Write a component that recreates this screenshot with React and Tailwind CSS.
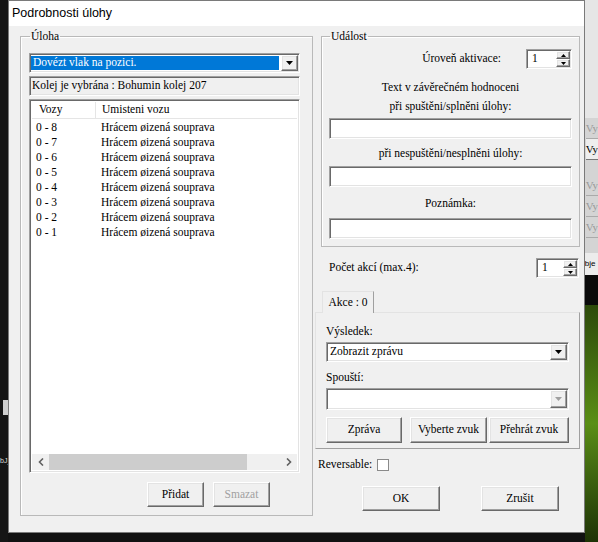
import React from 'react';

// klasické 3D okraje Windows dialogu
const sunken = 'border border-t-[#a0a0a0] border-l-[#a0a0a0] border-r-white border-b-white shadow-[inset_1px_1px_0_#696969,inset_-1px_-1px_0_#e3e3e3]';
const raised = 'border border-t-white border-l-white border-r-[#696969] border-b-[#696969] shadow-[inset_-1px_-1px_0_#a0a0a0,inset_1px_1px_0_#e3e3e3]';

function Arrow({ dir = 'down', disabled }) {
    const color = disabled ? '#a0a0a0' : '#000';
    const pts = dir === 'down' ? '0,0 7,0 3.5,4' : '0,4 7,4 3.5,0';
    return (
        <svg width="7" height="4" viewBox="0 0 7 4">
            <polygon points={pts} fill={color} />
        </svg>
    );
}

function Combo({ value, selected, disabled, className = '' }) {
    return (
        <div className={`flex h-[20px] bg-white ${sunken} ${className}`}>
            <div className="flex-1 flex items-center px-[1px] py-[2px]">
                {value && (
                    <span className={`w-full h-full flex items-center px-[2px] ${selected ? 'bg-[#0078d7] text-white' : 'text-black'}`}>
                        {value}
                    </span>
                )}
            </div>
            <div className={`w-[17px] m-[1px] flex items-center justify-center bg-[#f0f0f0] ${raised}`}>
                <Arrow disabled={disabled} />
            </div>
        </div>
    );
}

function Spin({ value, className = '' }) {
    return (
        <div className={`flex h-[20px] bg-white ${sunken} ${className}`}>
            <div className="flex-1 flex items-center pl-[5px]">{value}</div>
            <div className="w-[16px] flex flex-col p-[1px] gap-0">
                <div className={`flex-1 flex items-center justify-center bg-[#f0f0f0] ${raised}`}>
                    <svg width="5" height="3" viewBox="0 0 5 3"><polygon points="0,3 5,3 2.5,0" fill="#000" /></svg>
                </div>
                <div className={`flex-1 flex items-center justify-center bg-[#f0f0f0] ${raised}`}>
                    <svg width="5" height="3" viewBox="0 0 5 3"><polygon points="0,0 5,0 2.5,3" fill="#000" /></svg>
                </div>
            </div>
        </div>
    );
}

function Button({ children, disabled, className = '' }) {
    return (
        <button className={`flex items-center justify-center bg-[#f0f0f0] ${raised} ${disabled ? 'text-[#a0a0a0]' : 'text-black'} ${className}`}>
            {children}
        </button>
    );
}

function TextBox({ className = '' }) {
    return <div className={`h-[21px] bg-white ${sunken} ${className}`} />;
}

const vozy = ['0 - 8', '0 - 7', '0 - 6', '0 - 5', '0 - 4', '0 - 3', '0 - 2', '0 - 1'];

function Uloha() {
    return (
        <fieldset className="w-[293px] border border-[#b9b9b9] shadow-[inset_1px_1px_0_white] pl-[8px] pr-[12px] pt-[9px] pb-[8px] flex flex-col">
            <legend className="ml-[1px] px-[1px] leading-[15px]">Úloha</legend>
            <Combo value="Dovézt vlak na pozici." selected />
            <div className={`mt-[3px] h-[20px] flex items-center px-[2px] bg-[#f0f0f0] ${sunken}`}>
                Kolej je vybrána : Bohumin kolej 207
            </div>
            <div className={`mt-[3px] h-[374px] bg-white flex flex-col ${sunken} p-[2px]`}>
                <div className="flex h-[17px] border-b border-[#e5e5e5]">
                    <div className="w-[64px] pl-[7px] border-r border-[#e5e5e5] flex items-center">Vozy</div>
                    <div className="pl-[6px] flex items-center">Umisteni vozu</div>
                </div>
                <div className="flex-1 flex flex-col pt-[1px]">
                    {vozy.map((v) => (
                        <div key={v} className="flex h-[15px] items-center">
                            <span className="w-[69px] pl-[4px]">{v}</span>
                            <span>Hrácem øizená souprava</span>
                        </div>
                    ))}
                </div>
                <div className="h-[16px] flex items-center bg-[#f0f0f0]">
                    <div className="w-[17px] flex justify-center">
                        <svg width="6" height="8" viewBox="0 0 6 8"><polyline points="5,0.5 1.5,4 5,7.5" fill="none" stroke="#606060" strokeWidth="1.6" /></svg>
                    </div>
                    <div className="w-[198px] h-full bg-[#cdcdcd]" />
                    <div className="flex-1" />
                    <div className="w-[17px] flex justify-center">
                        <svg width="6" height="8" viewBox="0 0 6 8"><polyline points="1,0.5 4.5,4 1,7.5" fill="none" stroke="#606060" strokeWidth="1.6" /></svg>
                    </div>
                </div>
            </div>
            <div className="flex justify-center gap-[9px] mt-[9px] pl-[88px]">
                <Button className="w-[57px] h-[25px]">Přidat</Button>
                <Button className="w-[57px] h-[25px]" disabled>Smazat</Button>
            </div>
        </fieldset>
    );
}

function Udalost() {
    return (
        <fieldset className="ml-[8px] w-[259px] border border-[#b9b9b9] shadow-[inset_1px_1px_0_white] pl-[7px] pr-[7px] pt-[5px] pb-[7px] flex flex-col">
            <legend className="ml-[1px] px-[1px] leading-[15px]">Událost</legend>
            <div className="flex items-center justify-end">
                <span className="mr-[25px]">Úroveň aktivace:</span>
                <Spin value="1" className="w-[46px]" />
            </div>
            <div className="text-center mt-[9px] leading-[19px]">Text v závěrečném hodnoceni</div>
            <div className="text-center leading-[19px]">při spuštěni/splněni úlohy:</div>
            <TextBox className="mt-[2px]" />
            <div className="text-center mt-[5px] leading-[19px]">při nespuštěni/nesplněni úlohy:</div>
            <TextBox className="mt-[3px]" />
            <div className="text-center mt-[7px] leading-[19px]">Poznámka:</div>
            <TextBox className="mt-[5px]" />
        </fieldset>
    );
}

function Akce() {
    return (
        <div className="flex flex-col ml-[2px]">
            <div className="flex pl-[7px]">
                <div className="w-[52px] h-[22px] border border-b-0 border-t-[#e3e3e3] border-l-[#e3e3e3] border-r-[#a0a0a0] flex items-center justify-center bg-[#f0f0f0] relative top-[1px]">
                    Akce : 0
                </div>
            </div>
            <div className="w-[265px] h-[137px] border border-t-[#e3e3e3] border-l-[#e3e3e3] border-r-[#a0a0a0] border-b-[#a0a0a0] px-[10px] pt-[11px] flex flex-col">
                <div className="leading-[15px]">Výsledek:</div>
                <Combo value="Zobrazit zprávu" className="mt-[3px]" />
                <div className="leading-[15px] mt-[8px]">Spouští:</div>
                <Combo disabled className="mt-[3px] h-[22px]" />
                <div className="flex gap-[8px] mt-[7px]">
                    <Button className="w-[78px] h-[26px]">Zpráva</Button>
                    <div className="flex gap-[2px]">
                        <Button className="w-[77px] h-[26px]">Vyberte zvuk</Button>
                        <Button className="w-[80px] h-[26px]">Přehrát zvuk</Button>
                    </div>
                </div>
            </div>
        </div>
    );
}

export default function App() {
    return (
        <div className="w-[598px] h-[542px] bg-[#111] flex overflow-hidden text-[11.5px] text-black" style={{ fontFamily: '"Liberation Serif", serif' }}>
            {/* plocha vlevo */}
            <div className="w-[8px] flex flex-col bg-[#151515]">
                <div className="h-[400px]" />
                <div className="ml-[3px] w-[5px] h-[15px] bg-[#cfcfcf]" />
                <div className="mt-[40px] text-[#ddd] text-[7px] leading-[12px] whitespace-nowrap" style={{ fontFamily: '"Liberation Sans", sans-serif' }}>bJ_</div>
            </div>

            {/* okno dialogu */}
            <div className="w-[581px] h-[533px] flex flex-col border border-[#7a7a7a] bg-[#f0f0f0]">
                <div className="h-[25px] bg-white flex items-center pl-[3px] text-[12.5px]" style={{ fontFamily: '"Liberation Sans", sans-serif' }}>
                    Podrobnosti úlohy
                </div>
                <div className="flex pl-[11px] pt-[3px]">
                    <Uloha />
                    <div className="flex flex-col">
                        <Udalost />
                        <div className="flex items-center ml-[16px] mt-[11px] w-[250px]">
                            <span className="flex-1">Počet akcí (max.4):</span>
                            <Spin value="1" className="w-[43px]" />
                        </div>
                        <div className="mt-[12px]">
                            <Akce />
                        </div>
                        <div className="flex items-center ml-[5px] mt-[7px]">
                            <span>Reversable:</span>
                            <div className="ml-[5px] w-[12px] h-[12px] bg-white border border-[#8a8a8a]" />
                        </div>
                        <div className="flex ml-[49px] mt-[13px] gap-[41px]">
                            <Button className="w-[78px] h-[25px]">OK</Button>
                            <Button className="w-[78px] h-[25px]">Zrušit</Button>
                        </div>
                    </div>
                </div>
            </div>

            {/* plocha vpravo */}
            <div className="flex-1 flex flex-col">
                <div className="h-[118px] bg-[#e6e6e6]" />
                <div className="h-[135px] bg-[#d4d4d4] flex flex-col text-[11px] text-[#999] leading-[20px] pl-[1px]">
                    <div className="border-b border-[#aaa]">Vy</div>
                    <div className="text-black bg-[#eee] border-b border-[#777]">Vy</div>
                    <div className="h-[15px]" />
                    <div className="border-b border-[#aaa]">Vy</div>
                    <div className="border-b border-[#aaa]">Vy</div>
                    <div className="border-b border-[#aaa]">Vy</div>
                </div>
                <div className="h-[22px] bg-[#ececec] text-[8px] leading-[22px] whitespace-nowrap" style={{ fontFamily: '"Liberation Sans", sans-serif' }}>bje</div>
                <div className="h-[30px] bg-[#0a0a0a]" />
                <div className="flex-1 bg-gradient-to-b from-[#2d4a0a] via-[#5a8f16] to-[#1e3306]" />
            </div>
        </div>
    );
}
